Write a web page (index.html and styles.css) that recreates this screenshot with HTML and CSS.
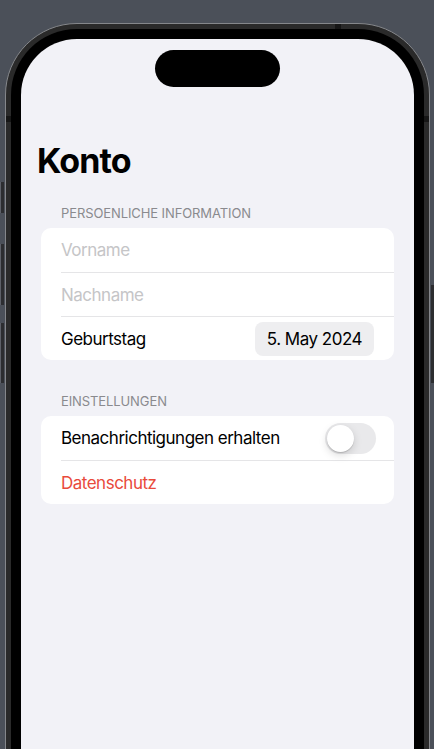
FILE: index.html
```html
<!DOCTYPE html>
<html lang="de">
<head>
<meta charset="utf-8">
<title>Konto</title>
<link rel="stylesheet" href="styles.css">
</head>
<body>
<div class="phone">
  <span class="side-btn side-btn--action"></span>
  <span class="side-btn side-btn--vol-up"></span>
  <span class="side-btn side-btn--vol-down"></span>
  <span class="side-btn side-btn--power"></span>
  <span class="antenna antenna--left"></span>
  <span class="antenna antenna--right"></span>
  <span class="antenna antenna--top"></span>
  <div class="bezel">
    <div class="screen">
      <div class="island"></div>
      <h1 class="title">Konto</h1>

      <section class="group">
        <h2 class="group-header">PERSOENLICHE INFORMATION</h2>
        <div class="card">
          <div class="row"><span class="placeholder">Vorname</span></div>
          <div class="row"><span class="placeholder">Nachname</span></div>
          <div class="row">
            <span class="label">Geburtstag</span>
            <span class="date-pill">5. May 2024</span>
          </div>
        </div>
      </section>

      <section class="group">
        <h2 class="group-header">EINSTELLUNGEN</h2>
        <div class="card">
          <div class="row">
            <span class="label">Benachrichtigungen erhalten</span>
            <span class="toggle"><span class="knob"></span></span>
          </div>
          <div class="row"><span class="label label--danger">Datenschutz</span></div>
        </div>
      </section>
    </div>
  </div>
</div>
</body>
</html>
```

FILE: styles.css
```css
html, body {
  margin: 0;
  height: 749px;
  overflow: hidden;
}

body {
  background: #4b5059;
  font-family: Inter, "Noto Sans", "Liberation Sans", sans-serif;
  color: #000;
}

.phone {
  position: relative;
  box-sizing: border-box;
  width: 425px;
  height: 820px;
  margin: 23px 0 0 5px;
  padding: 5px;
  border: 1px solid #85878b;
  border-radius: 72px;
  background: #2a2a2a;
}

.side-btn {
  position: absolute;
  width: 4px;
  background: #2c2d30;
  border-left: 1px solid #5d6068;
  box-sizing: border-box;
}

.side-btn--action { left: -6px; top: 158px; height: 31px; }
.side-btn--vol-up { left: -6px; top: 220px; height: 61px; }
.side-btn--vol-down { left: -6px; top: 299px; height: 60px; }
.side-btn--power {
  right: -6px;
  top: 261px;
  height: 98px;
  border-left: none;
  border-right: 1px solid #5d6068;
}

.antenna {
  position: absolute;
  background: #161616;
}
.antenna--left { left: 0; top: 92px; width: 5px; height: 6px; }
.antenna--right { right: 0; top: 92px; width: 5px; height: 6px; }
.antenna--top { top: 0; left: 329px; width: 6px; height: 5px; }

.bezel {
  box-sizing: border-box;
  height: 100%;
  padding: 10px;
  border-radius: 66px;
  background: #000;
}

.screen {
  position: relative;
  box-sizing: border-box;
  height: 100%;
  padding-top: 101px;
  border-radius: 56px;
  background: #f2f2f7;
  overflow: hidden;
}

.island {
  position: absolute;
  top: 11px;
  left: 134px;
  width: 125px;
  height: 37px;
  border-radius: 19px;
  background: #000;
}

.title {
  margin: 0 0 24px;
  padding-left: 16px;
  font-size: 34px;
  font-weight: 700;
  line-height: 41px;
  letter-spacing: -0.9px;
}

.group {
  padding: 0 20px;
  margin-bottom: 33px;
}

.group-header {
  margin: 0 0 7px;
  padding-left: 20px;
  font-size: 13px;
  font-weight: 400;
  line-height: 16px;
  color: #8a8a8e;
  letter-spacing: -0.1px;
}

.card {
  background: #fff;
  border-radius: 10px;
}

.row {
  box-sizing: border-box;
  display: flex;
  align-items: center;
  justify-content: space-between;
  height: 44px;
  margin-left: 20px;
  padding-right: 20px;
  font-size: 17px;
  letter-spacing: -0.5px;
}

.row + .row {
  border-top: 1px solid #e5e5e7;
}

.placeholder { color: #c5c5c7; }

.label--danger { color: #e94a3b; }

.date-pill {
  height: 34px;
  padding: 0 12px;
  line-height: 34px;
  border-radius: 8px;
  background: #eeeef0;
}

.toggle {
  box-sizing: border-box;
  display: flex;
  width: 51px;
  height: 31px;
  margin-right: -2px;
  padding: 2px;
  border-radius: 16px;
  background: #e9e9eb;
}

.knob {
  width: 27px;
  height: 27px;
  border-radius: 50%;
  background: #fff;
  box-shadow: 0 3px 8px rgba(0, 0, 0, 0.15), 0 1px 1px rgba(0, 0, 0, 0.16);
}
```
